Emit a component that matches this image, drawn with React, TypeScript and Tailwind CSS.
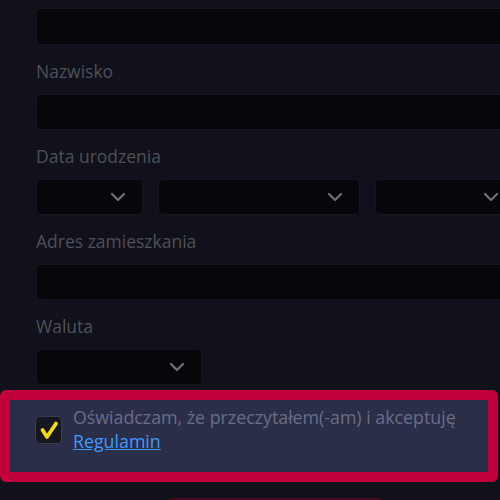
function Chevron() {
  return (
    <svg width="16" height="10" viewBox="0 0 16 10" fill="none" className="text-[#6f7079]">
      <path d="M2 2l6 6 6-6" stroke="currentColor" strokeWidth="2.2" strokeLinecap="round" strokeLinejoin="round" />
    </svg>
  );
}

function Field({ label, children }: { label: string; children: React.ReactNode }) {
  return (
    <div className="pt-[13px]">
      <div className="h-6 leading-6 text-[17.5px] font-medium text-[#4f5059] translate-y-[1px]">{label}</div>
      <div className="mt-3">{children}</div>
    </div>
  );
}

function Input() {
  return <div className="h-[36px] w-full rounded-[5px] border border-[#15161f] bg-[#07070b]" />;
}

function Select({ className }: { className: string }) {
  return (
    <div
      className={`h-[36px] rounded-[5px] border border-[#15161f] bg-[#07070b] flex items-center justify-end pr-4 ${className}`}
    >
      <Chevron />
    </div>
  );
}

export default function App() {
  return (
    <div
      className="w-[500px] h-[500px] overflow-hidden bg-[#10111a]"
      style={{ fontFamily: '"Open Sans", "Liberation Sans", sans-serif' }}
    >
      <div className="w-[480px] ml-9 pt-2 flex flex-col">
        <div className="h-[37px] w-full rounded-[5px] border border-[#15161f] bg-[#07070b]" />
        <Field label="Nazwisko">
          <Input />
        </Field>
        <Field label="Data urodzenia">
          <div className="flex gap-[15px]">
            <Select className="w-[107px]" />
            <Select className="w-[202px]" />
            <Select className="flex-1" />
          </div>
        </Field>
        <Field label="Adres zamieszkania">
          <Input />
        </Field>
        <Field label="Waluta">
          <Select className="w-[166px]" />
        </Field>
      </div>
      <div className="mt-[5px] w-[498px] h-[92px] rounded-[6px] border-[10px] border-[#c1003b] bg-[#2b2e48] flex items-start pt-[15px] pl-[25px]">
        <div className="mt-[1px] w-[27px] h-[28px] shrink-0 rounded-[5px] bg-[#16161f] border border-[#3a3c52] flex items-center justify-center">
          <svg width="20" height="20" viewBox="0 0 20 20">
            <path
              d="M3.5 10 L8 17 L17 3.5"
              fill="none"
              stroke="#f5d90a"
              strokeWidth="3.8"
              strokeLinecap="round"
              strokeLinejoin="round"
            />
          </svg>
        </div>
        <div className="ml-[11px] -mt-[10px] text-[17.8px] leading-6 text-[#6a6d86]">
          Oświadczam, że przeczytałem(-am) i akceptuję
          <br />
          <a href="#" className="text-[#3d9bff] underline">
            Regulamin
          </a>
        </div>
      </div>
      <div className="mt-[16px] ml-[162px] w-[226px] h-10 rounded-t-[12px] bg-[#4a0a1d]" />
    </div>
  );
}
